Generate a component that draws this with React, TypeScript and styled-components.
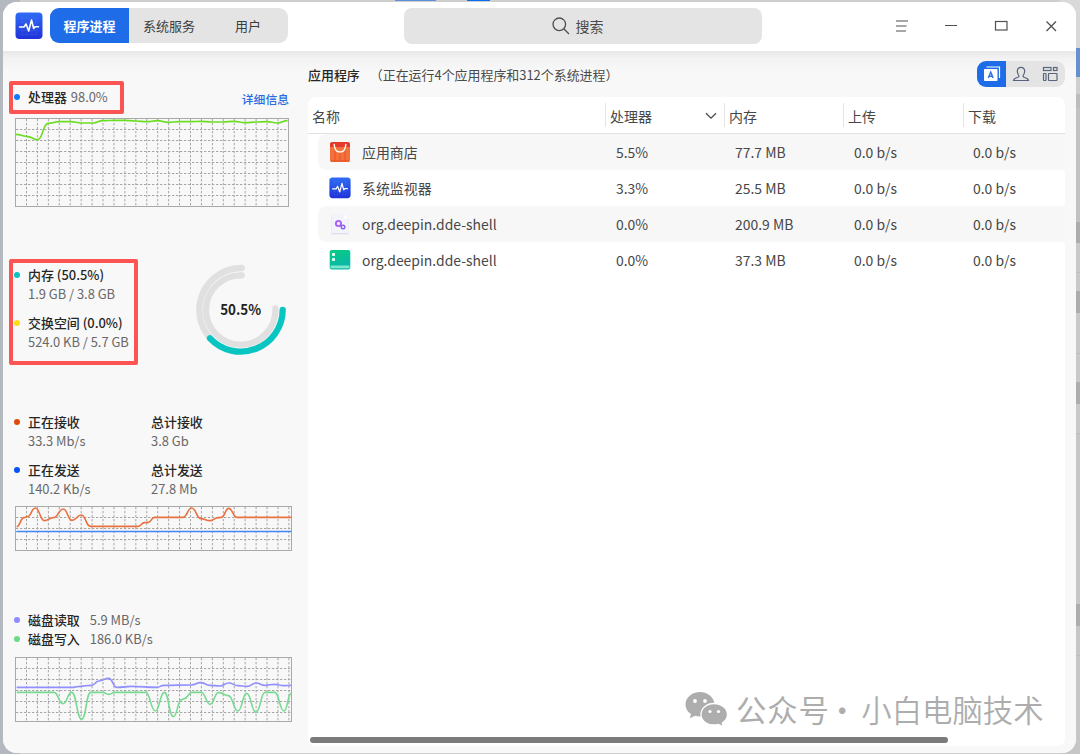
import React from "react";
import styled, { createGlobalStyle } from "styled-components";

const GlobalStyle = createGlobalStyle`
  * { box-sizing: border-box; }
  body {
    margin: 0;
    overflow: hidden;
    font-family: "Noto Sans CJK SC", "Noto Sans", sans-serif;
    color: #474747;
  }
`;

const Desktop = styled.div`
  width: 1080px;
  height: 754px;
  padding: 2px 4px 1px 3px;
  background:
    linear-gradient(#5f8fd8, #5f8fd8) 395px 0 / 41px 1px no-repeat,
    linear-gradient(#0a6cf0, #0a6cf0) 467px 0 / 23px 1px no-repeat,
    linear-gradient(
      #d9d9d9 0 48px, #6690d2 48px 77px, #cfcfcf 77px 94px, #bdbdbd 94px 108px,
      #c2c2c2 108px 222px, #adadad 222px 243px, #c9c9c9 243px 272px, #bdbdbd 272px 273px,
      #c9c9c9 273px 291px, #adadad 291px 313px, #c9c9c9 313px 353px, #bdbdbd 353px 354px,
      #c9c9c9 354px 382px, #adadad 382px 404px, #c9c9c9 404px 433px, #bdbdbd 433px 434px,
      #c6c6c6 434px 604px, #adadad 604px 626px, #c6c6c6 626px 655px, #bdbdbd 655px 656px, #c6c6c6 656px
    ) right / 20px 100% no-repeat,
    linear-gradient(90deg, #b4b9bf, #b4b9bf) left / 20px 100% no-repeat,
    #cfcfcf;
`;

const Window = styled.div`
  display: flex;
  flex-direction: column;
  height: 751px;
  border-radius: 14px;
  overflow: hidden;
  background: #f8f8f8;
`;

const TitleBar = styled.header`
  display: flex;
  align-items: center;
  flex: none;
  height: 49px;
  padding: 0 17px 2px 12px;
  background: #fff;
`;

const TabGroup = styled.nav`
  display: flex;
  width: 238px;
  height: 35px;
  margin-left: 7px;
  border-radius: 9px;
  overflow: hidden;
  background: #e4e4e4;
`;

const Tab = styled.div<{ $active?: boolean; $width: number }>`
  display: flex;
  align-items: center;
  justify-content: center;
  width: ${(p) => p.$width}px;
  font-size: 13px;
  font-weight: ${(p) => (p.$active ? 700 : 400)};
  color: ${(p) => (p.$active ? "#fff" : "#3c3c3c")};
  background: ${(p) => (p.$active ? "#1f6ce8" : "transparent")};
`;

const SearchBox = styled.div`
  display: flex;
  align-items: center;
  justify-content: center;
  gap: 6px;
  width: 358px;
  height: 36px;
  margin-left: 116px;
  padding-right: 11px;
  border-radius: 8px;
  background: #e4e4e4;
  font-size: 14px;
  color: #4a4a4a;
`;

const WindowButtons = styled.div`
  display: flex;
  align-items: center;
  gap: 34px;
  margin-left: auto;
`;

const Content = styled.div`
  display: flex;
  flex: 1;
  background: linear-gradient(#e7e7e7, #f2f2f2 7px, #f8f8f8 20px);
`;

const Sidebar = styled.aside`
  width: 305px;
  padding-left: 12px;
`;

const Section = styled.section<{ $height: number; $top: number }>`
  position: relative;
  height: ${(p) => p.$height}px;
  padding-top: ${(p) => p.$top}px;
`;

const Line = styled.div<{ $gap?: number }>`
  display: flex;
  align-items: center;
  height: 19px;
  margin-top: ${(p) => p.$gap ?? 0}px;
  padding-left: 13px;
  white-space: nowrap;
`;

const Dot = styled.i<{ $color: string }>`
  width: 6px;
  height: 6px;
  margin: 1px 8px 0 -14px;
  border-radius: 50%;
  background: ${(p) => p.$color};
`;

const Label = styled.span`
  font-size: 12.95px;
  font-weight: 500;
  color: #262626;
`;

const Value = styled.span<{ $left?: number }>`
  margin-left: ${(p) => p.$left ?? 0}px;
  font-size: 12.9px;
  color: #686868;
`;

const DetailLink = styled.a`
  margin: 3px 19px 0 auto;
  font-size: 11.8px;
  font-weight: 500;
  color: #2a6be0;
`;

const Columns = styled.div`
  display: grid;
  grid-template-columns: 123px 1fr;
`;

const ChartSvg = styled.svg<{ $gap: number }>`
  display: block;
  margin-top: ${(p) => p.$gap}px;
`;

const Highlight = styled.div<{ $top: number; $width: number; $height: number }>`
  position: absolute;
  left: -6px;
  top: ${(p) => p.$top}px;
  width: ${(p) => p.$width}px;
  height: ${(p) => p.$height}px;
  border: 4px solid #fb5453;
  border-radius: 2px;
`;

const MemoryRow = styled.div`
  display: flex;
`;

const MemoryText = styled.div`
  width: 178px;
`;

const RingSvg = styled.svg`
  margin-top: -3px;
`;

const Main = styled.main`
  position: relative;
  display: flex;
  flex-direction: column;
  flex: 1;
`;

const MainHeader = styled.div`
  display: flex;
  align-items: center;
  height: 46px;
  padding-right: 11px;
  font-size: 13px;
`;

const Summary = styled.span`
  margin-left: 10px;
  font-size: 12.95px;
  color: #4a4a4a;
`;

const ViewSwitch = styled.div`
  display: flex;
  width: 88px;
  height: 26px;
  margin-left: auto;
  border-radius: 9px;
  overflow: hidden;
  background: #e4e4e4;
`;

const ViewButton = styled.div<{ $active?: boolean }>`
  display: flex;
  align-items: center;
  justify-content: center;
  width: 30px;
  background: ${(p) => (p.$active ? "#1f6ce8" : "transparent")};
`;

const Table = styled.div`
  display: flex;
  flex-direction: column;
  width: 757px;
  height: 649px;
  border-radius: 8px;
  background: #fff;
`;

const HeadRow = styled.div`
  display: grid;
  grid-template-columns: 297px 119px 119px 120px 1fr;
  align-items: center;
  height: 37px;
  border-bottom: 1px solid #e2e2e2;
  font-size: 14px;
`;

const HeadCell = styled.div<{ $divided?: boolean }>`
  display: flex;
  align-items: center;
  justify-content: space-between;
  height: 24px;
  padding: 2px 7px 0 4px;
  border-left: ${(p) => (p.$divided ? "1px solid #e4e4e4" : "none")};
`;

const Row = styled.div<{ $striped?: boolean }>`
  display: grid;
  grid-template-columns: 298px 119px 119px 119px 1fr;
  align-items: center;
  height: 36px;
  margin-left: 10px;
  border-radius: 8px 0 0 8px;
  background: ${(p) => (p.$striped ? "#f7f7f7" : "#fff")};
  font-size: 13.95px;
  white-space: nowrap;
`;

const NameCell = styled.div`
  display: flex;
  align-items: center;
  gap: 11px;
  padding-left: 11px;
`;

const ScrollBar = styled.div`
  width: 638px;
  height: 6px;
  margin: auto 0 3px 2px;
  border-radius: 3px;
  background: #7b7b7b;
`;

const Watermark = styled.div`
  position: absolute;
  left: 377px;
  top: 636px;
  display: flex;
  align-items: center;
  height: 44px;
  font-size: 30.4px;
  color: #adadad;
  white-space: nowrap;
`;

const WatermarkText = styled.span<{ $left: number; $weight: number; $spacing?: number }>`
  margin-left: ${(p) => p.$left}px;
  font-weight: ${(p) => p.$weight};
  letter-spacing: ${(p) => p.$spacing ?? 0}px;
`;

type Point = [number, number];

/* Joins samples with curves whose tangents are horizontal at every sample. */
const curve = (points: Point[]) =>
  points.reduce((d, [x, y], i) => {
    if (i === 0) return `M${x} ${y}`;
    const [px, py] = points[i - 1];
    const mid = (px + x) / 2;
    return `${d} C${mid} ${py} ${mid} ${y} ${x} ${y}`;
  }, "");

interface Series {
  color: string;
  points: Point[];
}

/* Series are stored at three units per pixel. */
function Chart({ width, height, gap, series, rowStep = 33 }: { width: number; height: number; gap: number; series: Series[]; rowStep?: number }) {
  const w = width * 3;
  const h = height * 3;
  const xs: number[] = [];
  const ys: number[] = [];
  for (let x = 34.5; x < w - 6; x += 32.8) xs.push(x);
  for (let y = rowStep + 1.5; y < h - 8; y += rowStep) ys.push(y);
  return (
    <ChartSvg $gap={gap} width={width} height={height} viewBox={`0 0 ${w} ${h}`} fill="none">
      <g stroke="#a6a6a6" strokeWidth="3" strokeDasharray="7 5">
        {xs.map((x) => <path key={x} d={`M${x} 3V${h - 3}`} />)}
        {ys.map((y) => <path key={y} d={`M3 ${y}H${w - 3}`} />)}
      </g>
      <rect x="1.5" y="1.5" width={w - 3} height={h - 3} stroke="#a9a9a9" strokeWidth="3" />
      {series.map((s) => (
        <path key={s.color} d={curve(s.points)} stroke={s.color} strokeWidth="4.8" strokeLinejoin="round" />
      ))}
    </ChartSvg>
  );
}

const cpuSeries: Series[] = [
  {
    color: "#6ade22",
    points: [[2, 49], [35, 55], [68, 65], [99, 16], [133, 11], [166, 11], [199, 15], [235, 15], [263, 8], [296, 7], [329, 7], [362, 9], [395, 11], [427, 8], [460, 13], [493, 11], [525, 11], [558, 10], [591, 12], [624, 12], [657, 10], [690, 14], [723, 12], [755, 11], [787, 15], [818, 8]],
  },
];

const networkSeries: Series[] = [
  { color: "#4285f4", points: [[4, 76.5], [829, 76.5]] },
  {
    color: "#ea7040",
    points: [[5, 62], [27, 35], [37, 32], [61, 6], [88, 44], [115, 35], [145, 9], [171, 43], [199, 27], [226, 61], [370, 61], [388, 50], [400, 49], [418, 34], [504, 34], [530, 6], [558, 38], [585, 44], [610, 35], [619, 34], [641, 7], [666, 34], [829, 34]],
  },
];

const diskSeries: Series[] = [
  {
    color: "#928fff",
    points: [[5, 91], [175, 91], [195, 88], [229, 85], [252, 72], [281, 64], [306, 91], [350, 88], [425, 91], [447, 85], [529, 84], [557, 77], [585, 85], [615, 87], [641, 78], [669, 86], [697, 88], [723, 78], [750, 85], [779, 82], [805, 86], [829, 85]],
  },
  {
    color: "#77da91",
    points: [[5, 106], [117, 106], [144, 140], [170, 106], [200, 187], [227, 106], [263, 106], [281, 112], [300, 106], [392, 106], [421, 162], [448, 106], [475, 179], [500, 128], [508, 125], [530, 106], [559, 106], [585, 142], [611, 106], [640, 116], [669, 162], [695, 109], [723, 166], [750, 106], [779, 106], [807, 162], [829, 109]],
  },
];

function MonitorIcon({ size, id }: { size: number; id: string }) {
  return (
    <svg width={size} height={size} viewBox="0 0 28 28">
      <defs>
        <linearGradient id={id} x1="0" y1="0" x2="0" y2="1">
          <stop offset="0" stopColor="#2e6df6" />
          <stop offset="1" stopColor="#2031d8" />
        </linearGradient>
      </defs>
      <rect x="0.5" y="0.5" width="27" height="26.5" rx="4" fill={`url(#${id})`} />
      <path d="M5 6.5H23M5 10.5H23M5 18.5H23M5 22.5H23M7 4V24M11 4V24M17 4V24M21 4V24" stroke="#ffffff" strokeOpacity=".07" strokeWidth=".7" />
      <path d="M4.5 15H9L11 12L13.7 19L16.5 8L18.7 16.5L20 14.7H23.5" fill="none" stroke="#fff" strokeWidth="1.6" strokeLinejoin="round" strokeLinecap="round" />
    </svg>
  );
}

function StoreIcon() {
  return (
    <svg width="22" height="22" viewBox="0 0 22 22">
      <rect x="1" y="1" width="20" height="20" rx="2.5" fill="#f4713c" />
      <path d="M1 6V3.5A2.5 2.5 0 0 1 3.5 1H18.5A2.5 2.5 0 0 1 21 3.5V6Z" fill="#e5392c" />
      <path d="M6 7V20M11 12V20M16 7V20" stroke="#e8592c" strokeWidth="1.2" />
      <path d="M1.5 20H20.5" stroke="#df4c22" strokeWidth="1" />
      <path d="M5.2 3.5C5.5 8.5 7.5 11 11 11S16.5 8.5 16.8 3.5" fill="none" stroke="#fff5e8" strokeWidth="1.5" strokeLinecap="round" />
    </svg>
  );
}

function GearFileIcon() {
  return (
    <svg width="22" height="22" viewBox="0 0 22 22">
      <path d="M2.500 2H15L19.500 6V21.300H2.500Z" fill="#d5d9e6" />
      <path d="M2.500 1H15L19.500 5.500V20.300H2.500Z" fill="#f3f4fb" />
      <path d="M15 1V5.500H19.500Z" fill="#fff" />
      <circle cx="9.500" cy="10.500" r="2.600" fill="none" stroke="#a860f4" strokeWidth="1.900" />
      <circle cx="14" cy="14" r="1.800" fill="none" stroke="#8a5fe4" strokeWidth="1.400" />
    </svg>
  );
}

function PanelIcon() {
  return (
    <svg width="22" height="22" viewBox="0 0 22 22">
      <defs>
        <linearGradient id="panel" x1="0" y1="0" x2=".3" y2="1">
          <stop offset="0" stopColor="#08cd80" />
          <stop offset="1" stopColor="#09b5ac" />
        </linearGradient>
      </defs>
      <rect x=".7" y="1" width="20.600" height="19.500" rx="2" fill="url(#panel)" />
      <path d="M1.500 16.500H20.500V19.300H1.500Z" fill="#7de7cc" />
      <rect x="3" y="4" width="3" height="3" rx=".8" fill="#e6fff5" />
      <rect x="3" y="9" width="3" height="3" rx=".8" fill="#e6fff5" />
    </svg>
  );
}

function MemoryRing() {
  return (
    <RingSvg width="96" height="96" viewBox="0 0 96 96" fill="none" strokeWidth="6.300" strokeLinecap="round">
      <path d="M48.700 6A42 42 0 0 0 17 76" stroke="#e0e0e0" />
      <path d="M48.700 13.300A34.700 34.700 0 1 0 82.400 46.500" stroke="#e0e0e0" />
      <path d="M89.700 48A42 42 0 0 1 17 76.300" stroke="#08c5c2" />
      <text x="47.700" y="53" textAnchor="middle" fill="#222" stroke="none" fontSize="14.500" fontWeight="700" textLength="41" lengthAdjust="spacingAndGlyphs">50.5%</text>
    </RingSvg>
  );
}

const rows = [
  { icon: <StoreIcon />, name: "应用商店", cpu: "5.5%", memory: "77.7 MB" },
  { icon: <MonitorIcon size={22} id="monitor-row" />, name: "系统监视器", cpu: "3.3%", memory: "25.5 MB" },
  { icon: <GearFileIcon />, name: "org.deepin.dde-shell", cpu: "0.0%", memory: "200.9 MB" },
  { icon: <PanelIcon />, name: "org.deepin.dde-shell", cpu: "0.0%", memory: "37.3 MB" },
];

export default function App() {
  return (
    <Desktop>
      <GlobalStyle />
      <Window>
        <TitleBar>
          <MonitorIcon size={28} id="monitor-title" />
          <TabGroup>
            <Tab $active $width={79}>程序进程</Tab>
            <Tab $width={80}>系统服务</Tab>
            <Tab $width={78}>用户</Tab>
          </TabGroup>
          <SearchBox>
            <svg width="18" height="18" viewBox="0 0 18 18" fill="none" stroke="#505050" strokeWidth="1.300">
              <circle cx="7.300" cy="7.300" r="6.300" />
              <path d="M11.800 11.800L17 17" />
            </svg>
            搜索
          </SearchBox>
          <WindowButtons>
            <svg width="16" height="16" viewBox="0 0 16 16" stroke="#505050" strokeWidth="1.200">
              <path d="M3 3H15M3 8H13.500M3 13H13" />
            </svg>
            <svg width="16" height="16" viewBox="0 0 16 16" stroke="#505050" strokeWidth="1.200">
              <path d="M2 7.500H14" />
            </svg>
            <svg width="16" height="16" viewBox="0 0 16 16" fill="none" stroke="#505050" strokeWidth="1.200">
              <rect x="2.500" y="3.500" width="11.500" height="8.500" />
            </svg>
            <svg width="16" height="16" viewBox="0 0 16 16" stroke="#505050" strokeWidth="1.300">
              <path d="M3.500 3.500L13 13M13 3.500L3.500 13" />
            </svg>
          </WindowButtons>
        </TitleBar>

        <Content>
          <Sidebar>
            <Section $height={204} $top={36}>
              <Line>
                <Dot $color="#0a7dff" />
                <Label>处理器</Label>
                <Value $left={4}>98.0%</Value>
                <DetailLink>详细信息</DetailLink>
              </Line>
              <Chart width={274} height={89} gap={12} series={cpuSeries} />
              <Highlight $top={30} $width={115} $height={33} />
            </Section>

            <Section $height={145} $top={10}>
              <MemoryRow>
                <MemoryText>
                  <Line><Dot $color="#0ac4c0" /><Label>内存 (50.5%)</Label></Line>
                  <Line><Value>1.9 GB / 3.8 GB</Value></Line>
                  <Line $gap={9.500}><Dot $color="#ffdc14" /><Label>交换空间 (0.0%)</Label></Line>
                  <Line><Value>524.0 KB / 5.7 GB</Value></Line>
                </MemoryText>
                <MemoryRing />
              </MemoryRow>
              <Highlight $top={4} $width={129} $height={106} />
            </Section>

            <Section $height={200} $top={12}>
              <Columns>
                <div>
                  <Line><Dot $color="#e04a08" /><Label>正在接收</Label></Line>
                  <Line><Value>33.3 Mb/s</Value></Line>
                  <Line $gap={9.500}><Dot $color="#0852f5" /><Label>正在发送</Label></Line>
                  <Line><Value>140.2 Kb/s</Value></Line>
                </div>
                <div>
                  <Line><Label>总计接收</Label></Line>
                  <Line><Value>3.8 Gb</Value></Line>
                  <Line $gap={9.500}><Label>总计发送</Label></Line>
                  <Line><Value>27.8 Mb</Value></Line>
                </div>
              </Columns>
              <Chart width={277} height={45} gap={8.500} series={networkSeries} />
            </Section>

            <Section $height={150} $top={9.500}>
              <Line><Dot $color="#8f8bff" /><Label>磁盘读取</Label><Value $left={10}>5.9 MB/s</Value></Line>
              <Line><Dot $color="#6bd98a" /><Label>磁盘写入</Label><Value $left={10}>186.0 KB/s</Value></Line>
              <Chart width={277} height={65} gap={9.500} series={diskSeries} />
            </Section>
          </Sidebar>

          <Main>
            <MainHeader>
              <Label>应用程序</Label>
              <Summary>（正在运行4个应用程序和312个系统进程）</Summary>
              <ViewSwitch>
                <ViewButton $active>
                  <svg width="18" height="16" viewBox="0 0 18 16">
                    <path d="M3.500 1H16.500V12" fill="none" stroke="#fff" strokeWidth="1.200" />
                    <rect x="1" y="3" width="13.500" height="12" rx=".8" fill="#fff" />
                    <path d="M5.300 12L7.750 6L10.200 12M6.200 10.200H9.300" fill="none" stroke="#2b70e4" strokeWidth="1.400" />
                  </svg>
                </ViewButton>
                <ViewButton>
                  <svg width="18" height="16" viewBox="0 0 18 16" fill="none" stroke="#58657c" strokeWidth="1.200">
                    <path d="M1.500 14.500C2 12.500 3.500 12 5.500 11.500C7 11 7.300 10.300 6.500 9C4.500 5.500 5 1.300 9 1.300S13.500 5.500 11.500 9C10.700 10.300 11 11 12.500 11.500C14.500 12 16 12.500 16.500 14.500Z" />
                  </svg>
                </ViewButton>
                <ViewButton>
                  <svg width="16" height="16" viewBox="0 0 16 16" fill="none" stroke="#58657c" strokeWidth="1.200">
                    <rect x="1.500" y="1.500" width="7.500" height="3" />
                    <rect x="11.500" y="1.500" width="3.500" height="3" />
                    <rect x="1.500" y="7.500" width="2.500" height="7" rx=".5" />
                    <rect x="6.500" y="7.500" width="8.500" height="7" rx=".5" />
                  </svg>
                </ViewButton>
              </ViewSwitch>
            </MainHeader>

            <Table>
              <HeadRow>
                <HeadCell>名称</HeadCell>
                <HeadCell $divided>
                  处理器
                  <svg width="12" height="8" viewBox="0 0 12 8" fill="none" stroke="#4a4a4a" strokeWidth="1.300">
                    <path d="M1 1.200L6 6.200L11 1.200" />
                  </svg>
                </HeadCell>
                <HeadCell $divided>内存</HeadCell>
                <HeadCell $divided>上传</HeadCell>
                <HeadCell $divided>下载</HeadCell>
              </HeadRow>
              {rows.map((row, i) => (
                <Row key={i} $striped={i % 2 === 0}>
                  <NameCell>{row.icon}{row.name}</NameCell>
                  <span>{row.cpu}</span>
                  <span>{row.memory}</span>
                  <span>0.0 b/s</span>
                  <span>0.0 b/s</span>
                </Row>
              ))}
              <ScrollBar />
            </Table>

            <Watermark>
              <svg width="43" height="36" viewBox="0 0 43 36" fill="#adadad">
                <path d="M15 1C7 1 .5 6.500 .5 13.500C.5 17.500 2.500 20.800 6 23L4.800 27.300L10 24.800C11.500 25.300 13.300 25.500 15 25.500C23 25.500 29.500 20 29.500 13.500S23 1 15 1Z" />
                <path d="M29 12.500C21.500 12.500 16 17.500 16 23.500S21.500 34 29 34C30.500 34 32 33.800 33.300 33.400L38.500 35.800L37.300 32C40.500 30 42.500 27 42.500 23.500C42.500 17.500 36.500 12.500 29 12.500Z" stroke="#fff" strokeWidth="1.300" />
                <g fill="#fff">
                  <circle cx="10" cy="10" r="1.900" />
                  <circle cx="20" cy="10" r="1.900" />
                  <circle cx="25" cy="20.500" r="1.600" />
                  <circle cx="33.500" cy="20.500" r="1.600" />
                </g>
              </svg>
              <WatermarkText $left={8} $weight={400} $spacing={0.9}>公众号</WatermarkText>
              <WatermarkText $left={-3} $weight={400}>·</WatermarkText>
              <WatermarkText $left={4} $weight={350}>小白电脑技术</WatermarkText>
            </Watermark>
          </Main>
        </Content>
      </Window>
    </Desktop>
  );
}
